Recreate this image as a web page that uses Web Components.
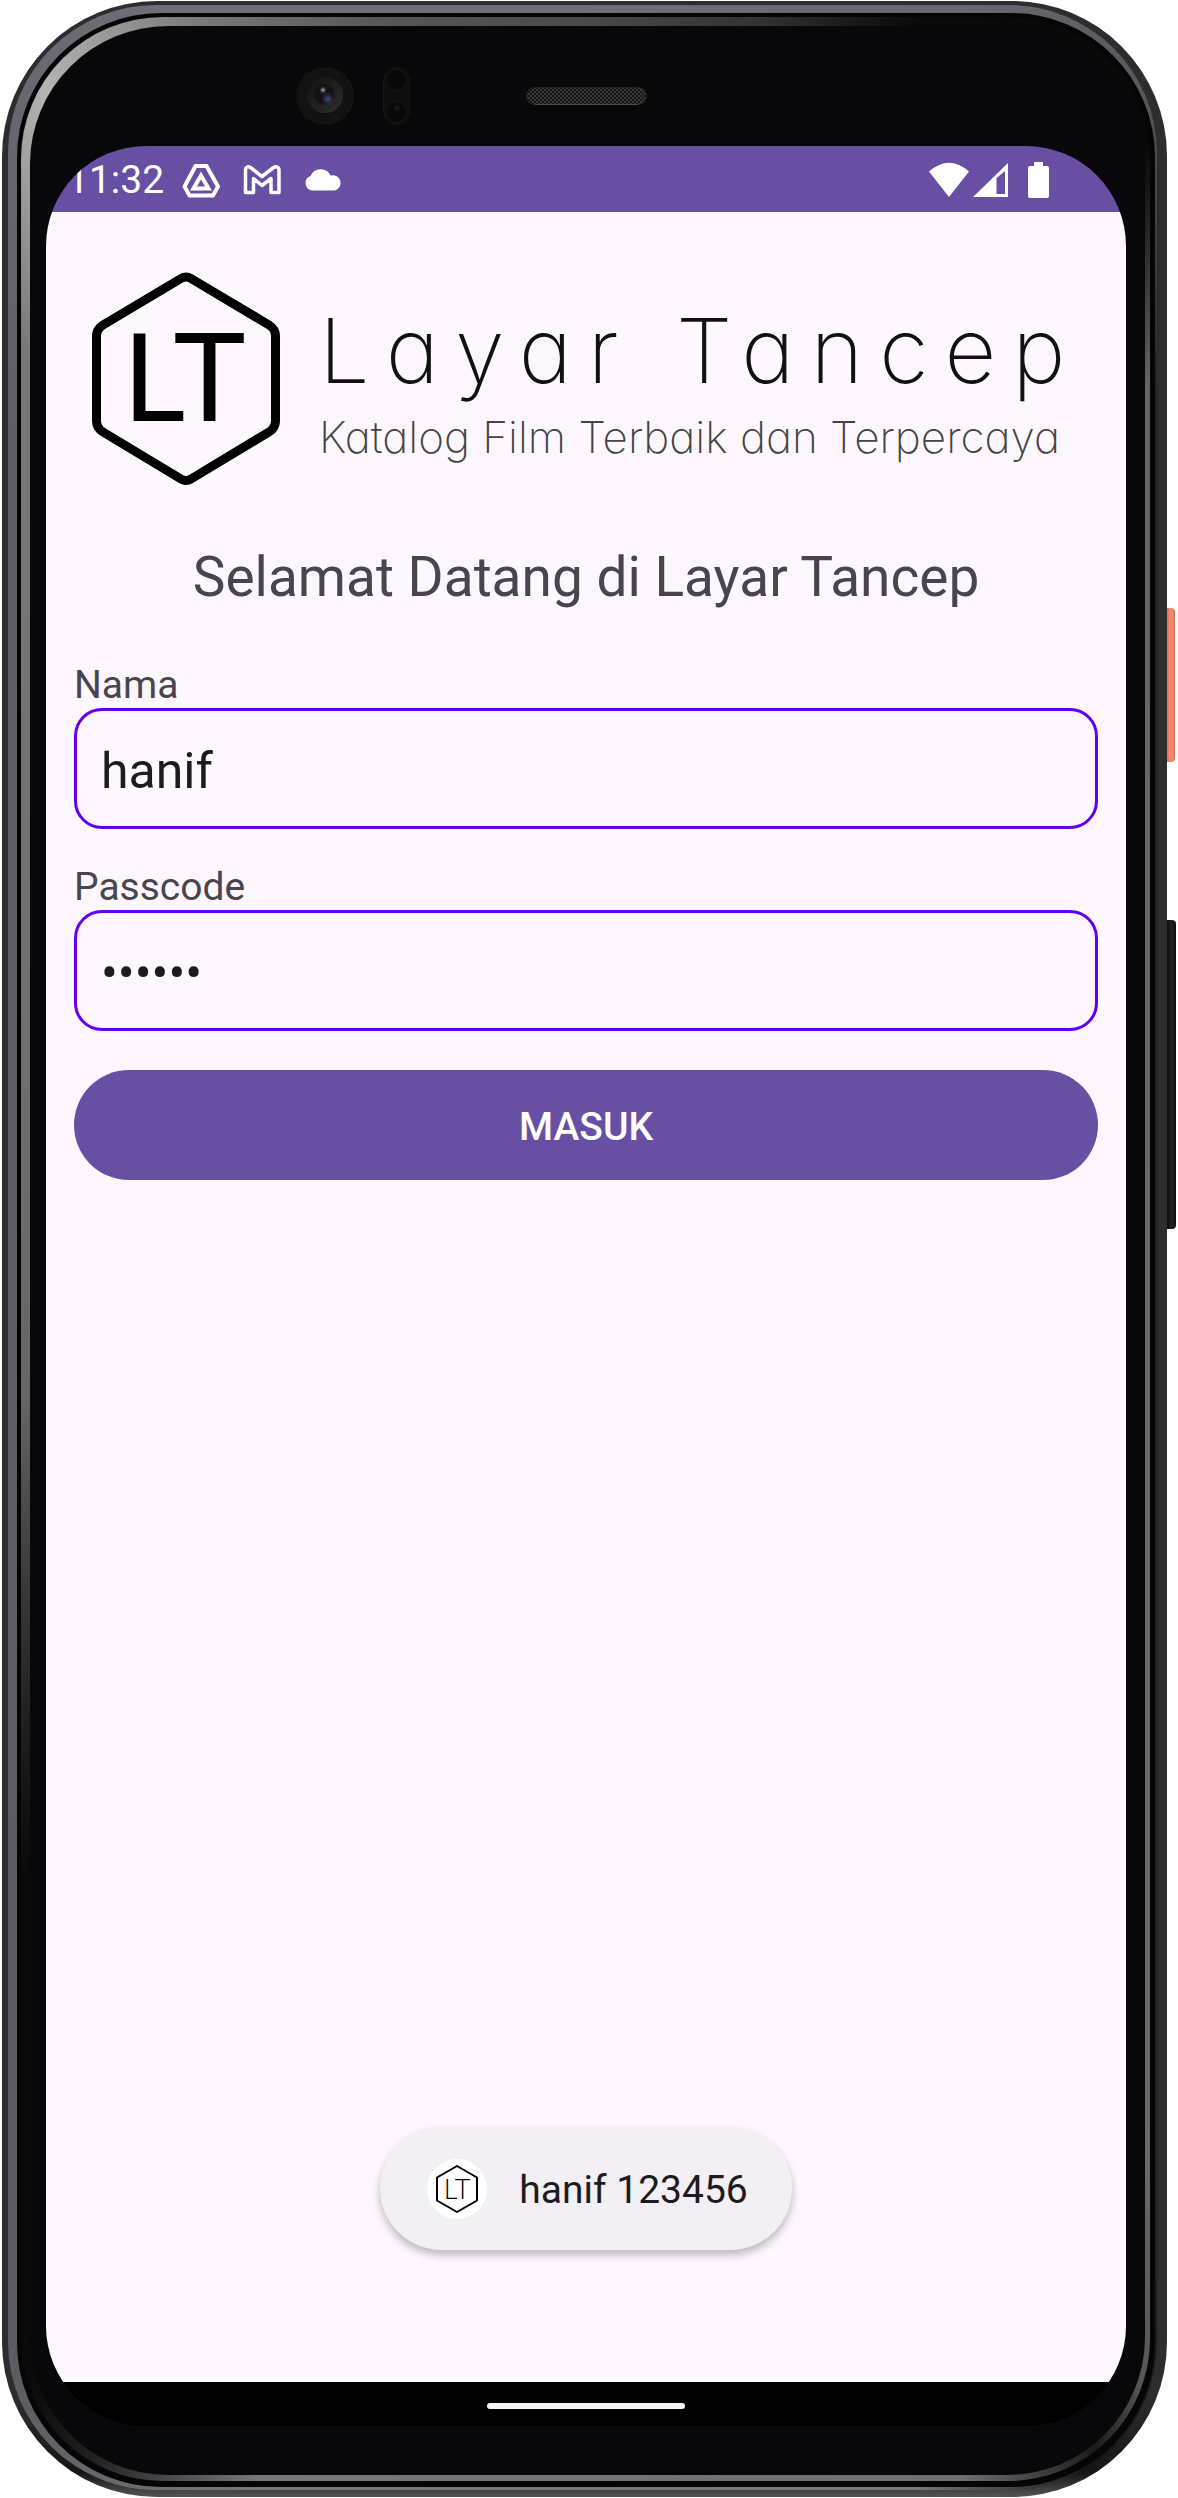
<!DOCTYPE html>
<html lang="id">
<head>
<meta charset="utf-8">
<meta name="viewport" content="width=device-width, initial-scale=1">
<title>Layar Tancep</title>
<style>
body { margin: 0; background: #fff; font-family: Roboto, "Liberation Sans", sans-serif; }
</style>
</head>
<body>
<phone-frame>
  <status-bar slot="screen" time="11:32"></status-bar>
  <login-page slot="screen"></login-page>
  <nav-bar slot="screen"></nav-bar>
</phone-frame>

<script>
const define = (name, html, setup) => {
  const template = document.createElement('template');
  template.innerHTML = html;
  customElements.define(name, class extends HTMLElement {
    constructor() {
      super();
      this.attachShadow({ mode: 'open' }).append(template.content.cloneNode(true));
    }
    connectedCallback() { if (setup) setup(this, this.shadowRoot); }
  });
};

/* Device shell: concentric rims, top sensors, screen slot and side keys */
define('phone-frame', `
<style>
  *, :host { box-sizing: border-box; }
  :host { display: flex; min-height: 100vh; padding: 1px 0 1px 2px; }
  .rim { display: flex; flex: 1; min-width: 0; }
  .body { padding: 4px 10px 7px 6px; border-radius: 155px;
    background: linear-gradient(180deg, #2c2e2e 0 96%, #141414 99%, #555 100%); }
  .edge { padding: 8px 2px 3px 9px; border-radius: 148px;
    background: conic-gradient(#6e6e76 0deg, #66686e 18deg, #55575c 26deg, #1f2123 34deg, #1f2123 150deg, #111 157deg, #777 165deg, #777 195deg, #5b5d62 206deg, #5d5f64 325deg, #6e6e76 340deg); }
  .seam { padding: 4px 5px 6px 4px; border-radius: 144px; background: #050506; }
  .glint { padding: 9px 5px 6px 9px; border-radius: 142px;
    background: conic-gradient(#4a4a4a 0deg, #333 8deg, #0a0a0a 15deg, #08080a 27deg, #666 33deg, #6a6a6a 148deg, #555 154deg, #1a1a1a 157deg, #6f6f6f 163deg, #777 195deg, #222 202deg, #0a0a0a 206deg, #0a0a0a 222deg, #666 255deg, #777 328deg, #b4b4b4 335deg, #777 343deg, #585858 350deg, #4a4a4a 360deg); }
  .face { flex-direction: column; padding: 0 19px 49px 16px; border-radius: 138px; background: #08080a; }
  .sensors { display: flex; align-items: center; height: 120px; padding: 19px 0 0 250px; }
  .camera { width: 58px; height: 58px; }
  .proximity { width: 27px; height: 58px; margin: 0 116px 0 29px; }
  .speaker { width: 121px; height: 18px; }
  .screen { flex: 1; display: flex; flex-direction: column; overflow: hidden; border-radius: 100px; background: #000; }
  .keys { display: flex; flex-direction: column; width: 11px; padding-top: 607px; gap: 158px; }
  .power { width: 8px; height: 154px; border-radius: 0 4px 4px 0; background: linear-gradient(90deg, #e86f56, #f08c72 40%, #ee8568 75%, #d9694f); }
  .volume { width: 9px; height: 309px; border-radius: 0 4px 4px 0; background: linear-gradient(90deg, #0c0d0e, #202122 50%, #101112); }
</style>
<div class="rim body"><div class="rim edge"><div class="rim seam"><div class="rim glint"><div class="rim face">
  <div class="sensors">
    <svg class="camera" viewBox="0 0 58 58" aria-hidden="true">
      <defs>
        <radialGradient id="lens" cx=".5" cy=".5" r=".5"><stop offset="0" stop-color="#17171c"/><stop offset=".7" stop-color="#101013"/><stop offset="1" stop-color="#1a1a1c"/></radialGradient>
        <radialGradient id="blue"><stop offset="0" stop-color="#46527e"/><stop offset="1" stop-color="#262c48" stop-opacity="0"/></radialGradient>
        <radialGradient id="shine"><stop offset="0" stop-color="#bbb"/><stop offset="1" stop-color="#444" stop-opacity="0"/></radialGradient>
        <linearGradient id="ring" x1="0" y1="0" x2="1" y2="1"><stop offset="0" stop-color="#101011"/><stop offset="1" stop-color="#2f2f31"/></linearGradient>
      </defs>
      <circle cx="29" cy="29" r="29" fill="#121212"/>
      <circle cx="29" cy="28" r="18" fill="url(#ring)"/>
      <circle cx="28" cy="27" r="11" fill="url(#lens)"/>
      <circle cx="32" cy="32" r="7" fill="url(#blue)"/>
      <circle cx="27" cy="23" r="4" fill="url(#shine)"/>
    </svg>
    <svg class="proximity" viewBox="0 0 27 58" aria-hidden="true">
      <rect x=".5" y=".5" width="26" height="57" rx="13" fill="#0e0e0f" stroke="#171718"/>
      <circle cx="13.500" cy="13" r="10" fill="#08080a" stroke="#131314"/>
      <circle cx="13.500" cy="45" r="10" fill="#08080a" stroke="#131314"/>
      <circle cx="14" cy="41" r="3" fill="#151517"/>
    </svg>
    <svg class="speaker" viewBox="0 0 121 18" aria-hidden="true">
      <defs><pattern id="mesh" width="4" height="4" patternUnits="userSpaceOnUse"><rect width="4" height="4" fill="#111"/><rect width="2" height="2" fill="#3c3c3c"/><rect x="2" y="2" width="2" height="2" fill="#3c3c3c"/></pattern></defs>
      <rect x=".5" y=".5" width="120" height="17" rx="8.500" fill="url(#mesh)" stroke="#222"/>
      <path d="M9 17.500H112" stroke="#4a4a4a"/>
    </svg>
  </div>
  <div class="screen"><slot name="screen"></slot></div>
</div></div></div></div></div>
<div class="keys"><div class="power"></div><div class="volume"></div></div>
`);

define('status-bar', `
<style>
  :host { display: flex; align-items: center; justify-content: space-between; box-sizing: border-box;
    height: 66px; padding: 1px 77px 0 21px; background: #6750a3; color: #fff; font-size: 39px; line-height: 46px; }
  .left, .icons, .right { display: flex; align-items: center; }
  .left { gap: 16px; }
  .icons { gap: 19px; }
  svg { display: block; width: 42px; height: 38px; fill: none; stroke: #fff; stroke-width: 4; stroke-linejoin: round; }
  .right svg { height: 36px; fill: #fff; stroke: none; }
  .right .signal { width: 36px; margin: 0 20px 0 2px; }
  .right .battery { width: 21px; }
</style>
<div class="left">
  <time></time>
  <div class="icons">
  <svg viewBox="0 0 42 38" aria-hidden="true"><path d="M15.500 5H26.500L38 25.500L33 34.500H9.500L4.500 25.500Z"/><path d="M21 14.500L28.500 27.500H13.500Z" stroke-linejoin="miter"/></svg>
  <svg viewBox="0 0 42 38" aria-hidden="true"><path d="M4.500 9C4.500 6 7 5 9.500 6.500L21 15.500L32.500 6.500C35 5 38 6 38 9V31.500H30V17.500L21 24.500L12.500 17.500V31.500H4.500Z" stroke-width="3.500"/></svg>
  <svg viewBox="0 0 42 38" aria-hidden="true"><path d="M10 29.500A7.500 7.500 0 0 1 8.500 15A11 11 0 0 1 28.500 14.500A7.500 7.500 0 0 1 33 29.500Z" fill="#fff" stroke="none"/></svg>
  </div>
</div>
<div class="right">
  <svg viewBox="0 0 42 36" aria-hidden="true"><path d="M1 9.500Q21 -8 41 9.500L21 35Z"/></svg>
  <svg class="signal" viewBox="0 0 36 36" aria-hidden="true"><path fill-rule="evenodd" d="M36 1V35H1ZM24.500 16V32H33V9Z"/></svg>
  <svg class="battery" viewBox="0 0 21 36" aria-hidden="true"><path d="M6 0H15V4H19Q21 4 21 6V34Q21 36 19 36H2Q0 36 0 34V6Q0 4 2 4H6Z"/></svg>
</div>
`, (host, root) => { root.querySelector('time').textContent = host.getAttribute('time'); });

/* Hexagon monogram */
define('brand-mark', `
<style>
  :host { display: block; flex: none; width: 188px; }
  :host([small]) { width: 42px; }
  svg { display: block; width: 100%; fill: none; stroke: #000; stroke-linejoin: round; }
  text { fill: #000; stroke: none; font-family: Lato, sans-serif; text-anchor: middle; }
  .thin { display: none; }
  :host([small]) .bold { display: none; }
  :host([small]) .thin { display: block; }
  .bold text { font-weight: 400; font-size: 122px; }
  .thin text { font-weight: 300; font-size: 27px; }
</style>
<svg class="bold" viewBox="0 0 188 213" role="img" aria-label="LT">
  <path stroke-width="9" d="M99 6.500L177 53Q183.500 57 183.500 64V149Q183.500 156 177 160L99 207Q94 210 89 207L11 160Q4.500 156 4.500 149V64Q4.500 57 11 53L89 6.500Q94 3.500 99 6.500Z"/>
  <text x="92" y="149">LT</text>
</svg>
<svg class="thin" viewBox="0 0 42 48" role="img" aria-label="LT">
  <path stroke-width="2" d="M21 1L41 12.500V35.500L21 47L1 35.500V12.500Z"/>
  <text x="21" y="34">LT</text>
</svg>
`);

define('brand-banner', `
<style>
  :host { display: flex; align-items: flex-start; gap: 39px; padding: 60px 18px; }
  .words { padding-top: 34px; white-space: nowrap; font-family: Inter, sans-serif; font-weight: 200;
    font-feature-settings: "cv11"; color: #111; }
  .name { font-size: 90px; line-height: 90px; letter-spacing: 16px; }
  .tag { margin-top: 16px; font-size: 44px; line-height: 50px; color: #444; }
</style>
<brand-mark></brand-mark>
<div class="words"><div class="name">Layar Tancep</div><div class="tag">Katalog Film Terbaik dan Terpercaya</div></div>
`);

define('text-field', `
<style>
  :host { display: flex; flex-direction: column; }
  label { font-size: 39px; line-height: 46px; color: #49454f; }
  input { box-sizing: border-box; width: 100%; height: 121px; padding: 4px 24px 0; border: 3px solid #6200ee; border-radius: 28px;
    background: transparent; color: #1d1b20; font-family: inherit; font-size: 50px; line-height: 58px; outline: none; }
</style>
<label for="field"></label><input id="field">
`, (host, root) => {
  root.querySelector('label').textContent = host.getAttribute('label');
  const input = root.querySelector('input');
  input.type = host.getAttribute('type') || 'text';
  input.value = host.getAttribute('value');
});

define('toast-message', `
<style>
  :host { display: flex; align-items: center; gap: 32px; box-sizing: border-box; height: 123px; padding: 0 44px 0 47px;
    border-radius: 62px; background: #f2eff5; color: #1d1b20; font-size: 39px; line-height: 46px;
    box-shadow: 0 5px 9px rgba(0,0,0,.26); }
  .icon { display: flex; align-items: center; justify-content: center; width: 60px; height: 60px; border-radius: 50%; background: #fff; }
  .text { padding-top: 2px; }
</style>
<div class="icon"><brand-mark small></brand-mark></div><div class="text"><slot></slot></div>
`);

define('login-page', `
<style>
  :host { flex: 1; display: flex; flex-direction: column; box-sizing: border-box; padding: 0 28px 132px; background: #fef7ff; }
  h1 { margin: 0 0 53px; font-size: 55px; line-height: 64px; font-weight: 400; text-align: center; color: #49454f; }
  form { display: flex; flex-direction: column; gap: 35px; }
  button { height: 110px; margin-top: 4px; padding: 4px 0 0; border: 0; border-radius: 55px; background: #6750a3; color: #fff;
    font-family: inherit; font-size: 39px; line-height: 46px; font-weight: 500; }
  toast-message { margin: auto auto 0; }
</style>
<brand-banner></brand-banner>
<h1>Selamat Datang di Layar Tancep</h1>
<form>
  <text-field label="Nama" value="hanif"></text-field>
  <text-field label="Passcode" type="password" value="123456"></text-field>
  <button type="button">MASUK</button>
</form>
<toast-message role="status">hanif 123456</toast-message>
`);

define('nav-bar', `
<style>
  :host { display: flex; align-items: center; justify-content: center; box-sizing: border-box; height: 44px; padding-top: 4px; background: #000; }
  .handle { width: 198px; height: 6px; border-radius: 3px; background: #f5f5f5; }
</style>
<div class="handle"></div>
`);
</script>
</body>
</html>
